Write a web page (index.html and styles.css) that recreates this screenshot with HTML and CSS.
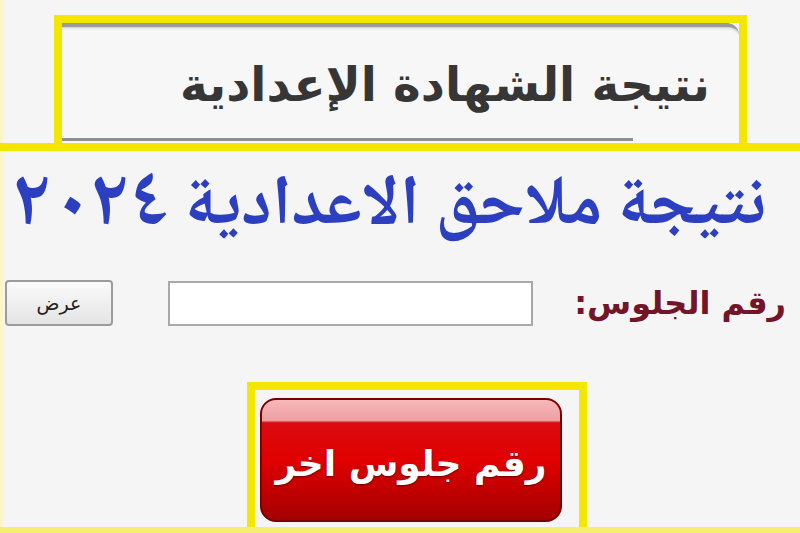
FILE: index.html
```html
<!DOCTYPE html>
<html lang="ar" dir="rtl">
<head>
    <meta charset="UTF-8">
    <title>نتيجة ملاحق الاعدادية ٢٠٢٤</title>
    <meta name="viewport" content="width=device-width, initial-scale=1.0">
    <link rel="stylesheet" href="styles.css">
</head>
<body>
    <div class="page">
        <div class="banner-row">
            <div class="banner">
                <div class="banner-panel">
                    <h1 class="banner-title">نتيجة الشهادة الإعدادية</h1>
                </div>
            </div>
        </div>

        <h2 class="headline">نتيجة ملاحق الاعدادية <span class="year">٢٠٢٤</span></h2>

        <form class="seat-form" onsubmit="return false;">
            <label class="seat-label" for="seat">رقم الجلوس:</label>
            <input class="seat-input" id="seat" type="text">
            <button class="show-btn" type="submit">عرض</button>
        </form>

        <div class="again-row">
            <div class="again-frame">
                <a class="again-btn" href="#">رقم جلوس اخر</a>
            </div>
        </div>
    </div>
</body>
</html>
```

FILE: styles.css
```css
html, body { margin: 0; padding: 0; }
body {
    background: #f5f5f5;
    font-family: "DejaVu Sans", sans-serif;
    width: 800px;
    height: 533px;
    overflow: hidden;
}
.page {
    display: flex;
    flex-direction: column;
    height: 533px;
    box-shadow: inset 3px 0 0 #faf6c8;
}

/* top banner */
.banner-row {
    padding-top: 15px;
    padding-right: 53px;
    border-bottom: 8px solid #f3e600;
    display: flex;
    justify-content: flex-start;
}
.banner {
    width: 677px;
    height: 120px;
    border: 8px solid #f3e600;
    border-bottom: none;
    background: #f7f7f7;
}
.banner-panel {
    height: 118px;
    padding-right: 29px;
    box-sizing: border-box;
    border-top: 4px solid #9a9a9a;
    border-top-right-radius: 12px;
    background: linear-gradient(#8e8e8e, #8e8e8e) no-repeat left bottom / 571px 3px;
    box-shadow: inset 0 3px 3px -2px #c8c8c8;
    display: flex;
    align-items: center;
}
.banner-title {
    margin: 0;
    font-size: 47px;
    font-weight: bold;
    color: #363636;
    line-height: 1;
}

/* blue headline */
.headline {
    margin: 6px 0 0;
    padding-right: 34px;
    font-family: "Noto Naskh Arabic", "Noto Sans Arabic", "DejaVu Sans", sans-serif;
    font-size: 70px;
    font-weight: bold;
    color: #2c3fc0;
    line-height: 100px;
    height: 100px;
    white-space: nowrap;
}
.year { font-size: 80px; letter-spacing: 16px; }

/* seat number form */
.seat-form {
    display: flex;
    align-items: center;
    margin-top: 23px;
    padding-right: 14px;
}
.seat-label {
    font-size: 32px;
    font-weight: bold;
    color: #731428;
    width: 220px;
    margin-left: 33px;
}
.seat-input {
    width: 365px;
    height: 45px;
    box-sizing: border-box;
    border: 2px solid #a9a9a9;
    background: #fff;
    margin-left: 55px;
}
.show-btn {
    width: 108px;
    height: 46px;
    border: 2px solid #9c9c9c;
    border-radius: 4px;
    background: linear-gradient(#fbfbfb, #e4e4e4);
    font-family: "DejaVu Sans", sans-serif;
    font-size: 19px;
    color: #222;
}

/* another seat number */
.again-row {
    margin-top: auto;
    padding-right: 213px;
    border-bottom: 6px solid #f6ee70;
    display: flex;
    justify-content: flex-start;
}
.again-frame {
    width: 302px;
    height: 124px;
    padding: 8px 17px 5px 5px;
    border: 8px solid #f3e600;
    border-bottom: none;
    display: flex;
}
.again-btn {
    flex: 1;
    border-radius: 16px;
    border: 2px solid #7a0000;
    background: linear-gradient(#f7b7b9 0%, #ee9fa3 17%, #d90b10 19%, #e10000 50%, #a30000 100%);
    color: #fff;
    text-decoration: none;
    font-size: 36px;
    font-weight: bold;
    display: flex;
    align-items: center;
    justify-content: center;
    padding-top: 6px;
    text-shadow: 0 1px 2px #600;
}
```
